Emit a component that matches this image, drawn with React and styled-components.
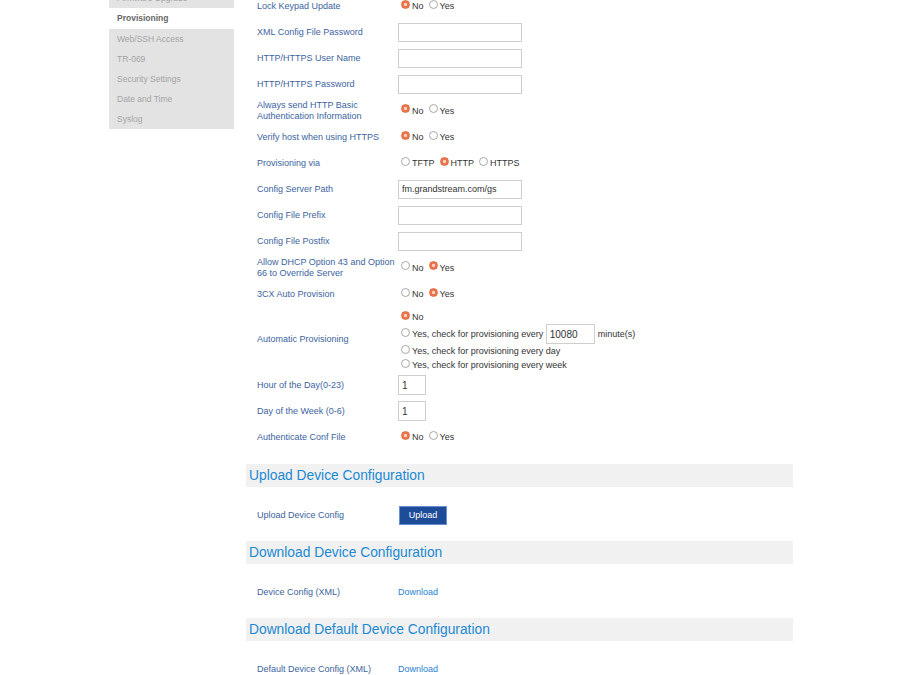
import styled, { createGlobalStyle } from "styled-components";

const GlobalStyle = createGlobalStyle`
  html, body {
    margin: 0;
    padding: 0;
    background: #fff;
    font-family: "Liberation Sans", Arial, sans-serif;
  }
`;

const menu = [
  "Firmware Upgrade",
  "Provisioning",
  "Web/SSH Access",
  "TR-069",
  "Security Settings",
  "Date and Time",
  "Syslog",
];

const Page = styled.div`
  display: flex;
  align-items: flex-start;
  gap: 12px;
  padding-left: 109px;
  margin-top: -12px;
  width: 900px;
  box-sizing: border-box;
`;

const Sidebar = styled.ul`
  list-style: none;
  margin: 0;
  padding: 0;
  width: 125px;
  flex-shrink: 0;
`;

const MenuItem = styled.li`
  height: ${(p) => (p.$active ? "21px" : "20px")};
  line-height: ${(p) => (p.$active ? "21px" : "20px")};
  padding-left: 8px;
  font-size: 8.5px;
  background: ${(p) => (p.$active ? "#fff" : "#e3e3e3")};
  color: ${(p) => (p.$active ? "#666" : "#a3a3a3")};
  font-weight: ${(p) => (p.$active ? "bold" : "normal")};
`;

const Main = styled.div`
  width: 547px;
  padding-top: 5px;
`;

const Form = styled.div`
  padding-left: 11px;
`;

const Row = styled.div`
  display: grid;
  grid-template-columns: 141px 1fr;
  align-items: center;
  min-height: ${(p) => p.$h || 26.2}px;
`;

const Label = styled.div`
  font-size: 9px;
  line-height: 11px;
  color: #3d64a0;
`;

const Value = styled.div`
  display: flex;
  align-items: center;
  font-size: 9px;
  color: #333;
`;

const TextInput = styled.input`
  box-sizing: border-box;
  width: ${(p) => p.$w || 124}px;
  height: ${(p) => p.$hgt || 19}px;
  border: 1px solid #cfcfcf;
  padding: 0 0 0 3px;
  font-family: "Liberation Sans", Arial, sans-serif;
  font-size: ${(p) => p.$fs || 9}px;
  color: #333;
  outline: none;
`;

const RadioBox = styled.input`
  appearance: none;
  -webkit-appearance: none;
  width: 9px;
  height: 9px;
  margin: 0 2px 0 3px;
  border-radius: 50%;
  border: 1px solid #a8a8a8;
  background: #fff;
  box-sizing: border-box;
  position: relative;
  top: -2px;
  &:checked {
    border-color: #e0683f;
    background: radial-gradient(circle, #fbd3c3 0 1.3px, #ea7650 1.9px);
  }
`;

const RadioText = styled.span`
  margin-right: 2px;
  color: #333;
`;

const OptionList = styled.div`
  display: flex;
  flex-direction: column;
  padding-top: 3px;
`;

const Option = styled.div`
  display: flex;
  align-items: center;
  height: ${(p) => p.$h || 14}px;
  font-size: 9px;
  color: #333;
`;

const Unit = styled.span`
  margin-left: 3px;
  font-size: 9px;
  color: #333;
`;

const SectionBar = styled.h2`
  margin: 14px 0 0;
  height: 23px;
  line-height: 23px;
  padding-left: 3px;
  background: #f1f1f1;
  font-size: 13.8px;
  font-weight: normal;
  color: #2189d3;
`;

const SectionBody = styled.div`
  padding: 2px 0 0 11px;
  & > div {
    min-height: 52px;
  }
  & + h2 {
    margin-top: 0;
  }
`;

const Button = styled.button`
  width: 48px;
  height: 19px;
  margin-left: 1px;
  background: #1f4c98;
  border: 1px solid #6a8fd0;
  color: #fff;
  font-family: "Liberation Sans", Arial, sans-serif;
  font-size: 9px;
  padding: 0;
`;

const Link = styled.a`
  color: #2a7fd0;
  font-size: 9px;
  text-decoration: none;
`;

const Radios = ({ name, options, checked }) => (
  <Value>
    {options.map((o) => (
      <label key={o} style={{ display: "flex", alignItems: "center" }}>
        <RadioBox type="radio" name={name} defaultChecked={o === checked} />
        <RadioText>{o}</RadioText>
      </label>
    ))}
  </Value>
);

const Field = ({ value }) => (
  <Value>
    <TextInput defaultValue={value || ""} />
  </Value>
);

const NoYes = ({ name, checked }) => (
  <Radios name={name} options={["No", "Yes"]} checked={checked} />
);

const App = () => {
  return (
    <>
      <GlobalStyle />
      <Page>
        <Sidebar>
          {menu.map((m) => (
            <MenuItem key={m} $active={m === "Provisioning"}>
              {m}
            </MenuItem>
          ))}
        </Sidebar>
        <Main>
          <Form>
            <Row>
              <Label>Lock Keypad Update</Label>
              <NoYes name="lock" checked="No" />
            </Row>
            <Row>
              <Label>XML Config File Password</Label>
              <Field />
            </Row>
            <Row>
              <Label>HTTP/HTTPS User Name</Label>
              <Field />
            </Row>
            <Row>
              <Label>HTTP/HTTPS Password</Label>
              <Field />
            </Row>
            <Row>
              <Label>Always send HTTP Basic Authentication Information</Label>
              <NoYes name="basic" checked="No" />
            </Row>
            <Row>
              <Label>Verify host when using HTTPS</Label>
              <NoYes name="verify" checked="No" />
            </Row>
            <Row>
              <Label>Provisioning via</Label>
              <Radios
                name="via"
                options={["TFTP", "HTTP", "HTTPS"]}
                checked="HTTP"
              />
            </Row>
            <Row>
              <Label>Config Server Path</Label>
              <Field value="fm.grandstream.com/gs" />
            </Row>
            <Row>
              <Label>Config File Prefix</Label>
              <Field />
            </Row>
            <Row>
              <Label>Config File Postfix</Label>
              <Field />
            </Row>
            <Row>
              <Label>Allow DHCP Option 43 and Option 66 to Override Server</Label>
              <NoYes name="dhcp" checked="Yes" />
            </Row>
            <Row>
              <Label>3CX Auto Provision</Label>
              <NoYes name="3cx" checked="Yes" />
            </Row>
            <Row $h={65}>
              <Label>Automatic Provisioning</Label>
              <OptionList>
                <Option>
                  <RadioBox type="radio" name="auto" defaultChecked />
                  No
                </Option>
                <Option $h={20}>
                  <RadioBox type="radio" name="auto" />
                  <span>Yes, check for provisioning every&nbsp;</span>
                  <TextInput defaultValue="10080" $w={49} $hgt={20} $fs={10} />
                  <Unit>minute(s)</Unit>
                </Option>
                <Option>
                  <RadioBox type="radio" name="auto" />
                  Yes, check for provisioning every day
                </Option>
                <Option>
                  <RadioBox type="radio" name="auto" />
                  Yes, check for provisioning every week
                </Option>
              </OptionList>
            </Row>
            <Row $h={26}>
              <Label>Hour of the Day(0-23)</Label>
              <Value>
                <TextInput defaultValue="1" $w={28} $hgt={20} $fs={10} />
              </Value>
            </Row>
            <Row $h={26}>
              <Label>Day of the Week (0-6)</Label>
              <Value>
                <TextInput defaultValue="1" $w={28} $hgt={20} $fs={10} />
              </Value>
            </Row>
            <Row $h={26}>
              <Label>Authenticate Conf File</Label>
              <NoYes name="auth" checked="No" />
            </Row>
          </Form>

          <SectionBar>Upload Device Configuration</SectionBar>
          <SectionBody>
            <Row>
              <Label>Upload Device Config</Label>
              <Value>
                <Button>Upload</Button>
              </Value>
            </Row>
          </SectionBody>

          <SectionBar>Download Device Configuration</SectionBar>
          <SectionBody>
            <Row>
              <Label>Device Config (XML)</Label>
              <Value>
                <Link href="#">Download</Link>
              </Value>
            </Row>
          </SectionBody>

          <SectionBar>Download Default Device Configuration</SectionBar>
          <SectionBody>
            <Row>
              <Label>Default Device Config (XML)</Label>
              <Value>
                <Link href="#">Download</Link>
              </Value>
            </Row>
          </SectionBody>
        </Main>
      </Page>
    </>
  );
};

export default App;
